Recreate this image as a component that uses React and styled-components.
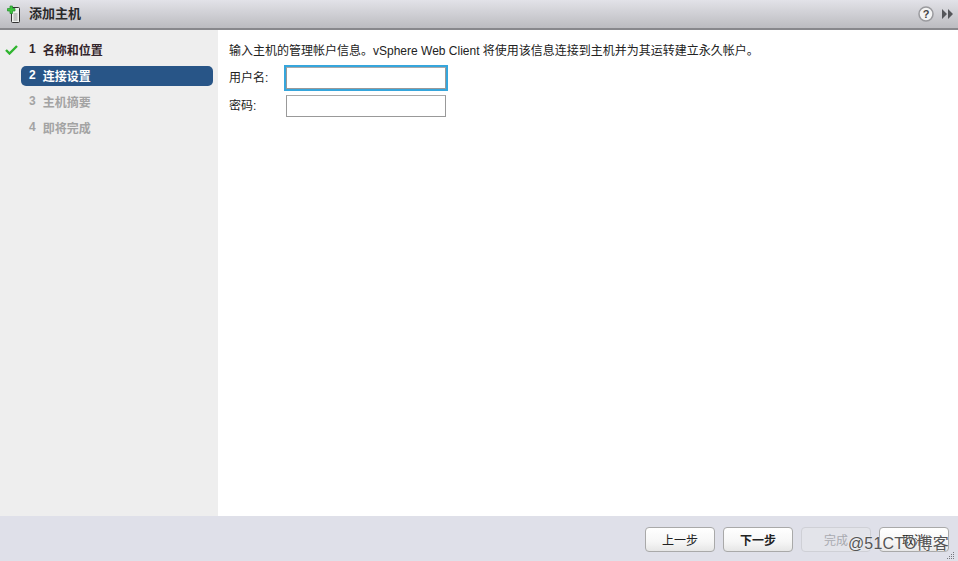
import React from "react";
import styled, { createGlobalStyle } from "styled-components";

const GlobalStyle = createGlobalStyle`
  html, body {
    margin: 0;
    padding: 0;
    background: #fff;
  }
  body {
    font-family: "Liberation Sans", "Noto Sans CJK SC", sans-serif;
    font-size: 12px;
    color: #222;
  }
`;

const Dialog = styled.div`
  position: relative;
  width: 958px;
  height: 561px;
  display: flex;
  flex-direction: column;
  overflow: hidden;
`;

const Header = styled.div`
  height: 28px;
  flex: none;
  display: flex;
  align-items: center;
  padding: 0 5px 0 7px;
  background: linear-gradient(#e2e2e8, #bcbcc0);
  border-bottom: 2px solid #88888c;
`;

const Title = styled.div`
  margin: 0 0 3px 7px;
  font-size: 13px;
  font-weight: 700;
  color: #2a2a2a;
`;

const HeaderTools = styled.div`
  margin: 0 0 1px auto;
  display: flex;
  align-items: center;
  gap: 8px;
`;

const Body = styled.div`
  flex: 1;
  display: flex;
  min-height: 0;
`;

const Sidebar = styled.div`
  width: 218px;
  flex: none;
  box-sizing: border-box;
  background: #eeeeee;
  padding: 10px 5px 0 0;
  display: flex;
  flex-direction: column;
  gap: 6px;
`;

const Step = styled.div`
  position: relative;
  box-sizing: border-box;
  height: 20px;
  margin-left: 21px;
  padding: 0 0 2px 8px;
  display: flex;
  align-items: center;
  gap: 7px;
  border-radius: 5px;
  font-size: 12px;
  font-weight: 700;
  background: ${(p) => (p.$active ? "#285587" : "transparent")};
  color: ${(p) => (p.$active ? "#ffffff" : p.$done ? "#33252b" : "#a3a3a3")};
`;

const Check = styled.svg`
  position: absolute;
  left: -16px;
  top: 5px;
`;

const Content = styled.div`
  flex: 1;
  padding: 13px 0 0 11px;
  background: #fff;
`;

const Intro = styled.div`
  height: 16px;
  line-height: 16px;
  color: #222;
`;

const Form = styled.div`
  margin-top: 8px;
  display: grid;
  grid-template-columns: 57px 160px;
  row-gap: 6px;
  align-items: center;
`;

const Label = styled.label`
  padding-bottom: 3px;
  color: #222;
`;

const TextInput = styled.input`
  box-sizing: border-box;
  width: 160px;
  height: 22px;
  margin: 0;
  padding: 0 3px;
  background: #fff;
  border: 1px solid #999;
  border-top-color: #aaa;
  outline: ${(p) => (p.$focused ? "2px solid #36a6dc" : "none")};
  outline-offset: 0;
`;

const Footer = styled.div`
  height: 45px;
  flex: none;
  box-sizing: border-box;
  background: #dfe0e9;
  padding: 11px 9px 0 0;
  display: flex;
  justify-content: flex-end;
  align-items: flex-start;
  gap: 8px;
`;

const Button = styled.button`
  width: 70px;
  height: 25px;
  margin: 0;
  padding: 0;
  font-family: inherit;
  font-size: 12px;
  font-weight: ${(p) => (p.$primary ? 700 : 400)};
  color: ${(p) => (p.disabled ? "#a9aab0" : "#222")};
  border-radius: 4px;
  border: 1px solid ${(p) => (p.disabled ? "#cfd0d6" : "#a9a9a9")};
  background: ${(p) =>
    p.disabled ? "#e3e4ea" : "linear-gradient(#ffffff, #f6f6f6 60%, #e6e6e6)"};
`;

const Watermark = styled.div`
  position: absolute;
  right: 9px;
  bottom: 7px;
  font-size: 16px;
  letter-spacing: 0.2px;
  color: #555;
  text-shadow: 0 0 2px #fff;
`;

const Grip = styled.svg`
  position: absolute;
  right: 3px;
  bottom: 1px;
`;

const ServerIcon = () => (
  <svg width="15" height="18" viewBox="0 0 15 18">
    <rect x="4.5" y="2.5" width="8" height="15" rx="1" fill="#eef0ee" stroke="#333" />
    <path d="M6.500 9h4M6.500 11h4M6.500 13h4M6.500 15h4" stroke="#999" />
    <path d="M3 1h2.500v2.500H8v2.500H5.500v2.500H3V6H.5V3.500H3z" fill="#3fc43f" stroke="#1f8f2a" strokeWidth=".7" />
  </svg>
);

const HelpIcon = () => (
  <svg width="16" height="16" viewBox="0 0 16 16">
    <circle cx="8" cy="8" r="7" fill="#f4f4f4" stroke="#9a9a9e" strokeWidth="1.500" />
    <text x="8" y="12" textAnchor="middle" fontSize="11" fontWeight="700" fill="#444" fontFamily="Liberation Sans">?</text>
  </svg>
);

const CollapseIcon = () => (
  <svg width="11" height="10" viewBox="0 0 11 10">
    <path d="M0 0l5 5-5 5zM6 0l5 5-5 5z" fill="#55565a" />
  </svg>
);

const steps = [
  { n: 1, label: "名称和位置", done: true },
  { n: 2, label: "连接设置", active: true },
  { n: 3, label: "主机摘要" },
  { n: 4, label: "即将完成" },
];

export default function App() {
  return (
    <Dialog>
      <GlobalStyle />
      <Header>
        <ServerIcon />
        <Title>添加主机</Title>
        <HeaderTools>
          <HelpIcon />
          <CollapseIcon />
        </HeaderTools>
      </Header>
      <Body>
        <Sidebar>
          {steps.map((s) => (
            <Step key={s.n} $active={s.active} $done={s.done}>
              {s.done && (
                <Check width="13" height="10" viewBox="0 0 13 10">
                  <path d="M1 5l3.500 3.500L12 1" fill="none" stroke="#2fb52f" strokeWidth="2.400" />
                </Check>
              )}
              <span>{s.n}</span>
              <span>{s.label}</span>
            </Step>
          ))}
        </Sidebar>
        <Content>
          <Intro>输入主机的管理帐户信息。vSphere Web Client 将使用该信息连接到主机并为其运转建立永久帐户。</Intro>
          <Form>
            <Label>用户名:</Label>
            <TextInput $focused />
            <Label>密码:</Label>
            <TextInput />
          </Form>
        </Content>
      </Body>
      <Footer>
        <Button>上一步</Button>
        <Button $primary>下一步</Button>
        <Button disabled>完成</Button>
        <Button>取消</Button>
      </Footer>
      <Watermark>@51CTO博客</Watermark>
      <Grip width="10" height="8" viewBox="0 0 10 8">
        <path d="M8 0h1v1H8zM6 2h1v1H6zM8 2h1v1H8zM4 4h1v1H4zM6 4h1v1H6zM8 4h1v1H8zM2 6h1v1H2zM4 6h1v1H4zM6 6h1v1H6zM8 6h1v1H8z" fill="#77777d" />
      </Grip>
    </Dialog>
  );
}
